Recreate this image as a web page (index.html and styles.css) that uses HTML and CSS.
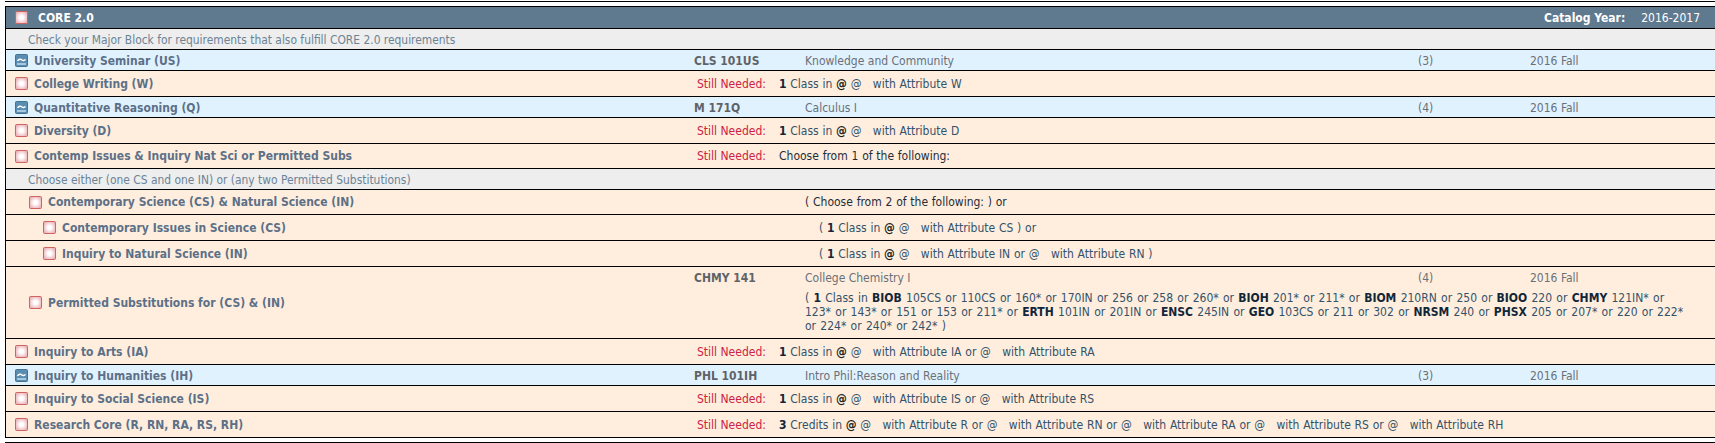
FILE: index.html
```html
<!DOCTYPE html>
<html lang="en">
<head>
<meta charset="utf-8">
<title>CORE 2.0</title>
<link rel="stylesheet" href="styles.css">
</head>
<body>
<svg class="defs" width="0" height="0" aria-hidden="true">
  <defs>
    <radialGradient id="pink" cx="50%" cy="50%" r="60%">
      <stop offset="0.25" stop-color="#ffffff"/>
      <stop offset="1" stop-color="#e8a9b0"/>
    </radialGradient>
    <symbol id="box" viewBox="0 0 13 13">
      <rect x="0.5" y="0.5" width="12" height="12" rx="1" fill="url(#pink)" stroke="#d0625f"/>
    </symbol>
    <symbol id="wave" viewBox="0 0 13 13">
      <rect x="0.5" y="0.5" width="12" height="12" rx="1" fill="#5b8db0" stroke="#44748f"/>
      <rect x="2" y="9" width="9" height="2" fill="#a9c8dd"/>
      <path d="M2.5 7 C4 4.6 6 5 7 6 C8 7 9.4 6.6 10.5 5.4" fill="none" stroke="#ffffff" stroke-width="1.4"/>
    </symbol>
  </defs>
</svg>
<div class="block">
  <div class="row head">
    <div class="label"><svg class="ico"><use href="#box"/></svg><span class="head-title">CORE 2.0</span></div>
    <div class="cat"><b>Catalog Year:</b><span>2016-2017</span></div>
  </div>
  <div class="row note"><p class="hint">Check your Major Block for requirements that also fulfill CORE 2.0 requirements</p></div>

  <div class="row done">
    <div class="label"><svg class="ico"><use href="#wave"/></svg><span>University Seminar (US)</span></div>
    <div class="course">CLS 101US</div><div class="title">Knowledge and Community</div><div class="cr">(3)</div><div class="term">2016 Fall</div>
  </div>
  <div class="row need tall">
    <div class="label"><svg class="ico"><use href="#box"/></svg><span>College Writing (W)</span></div>
    <div class="still">Still Needed:</div><div class="advice"><b>1</b> Class in <em>@</em> @ &nbsp; with Attribute W</div>
  </div>
  <div class="row done">
    <div class="label"><svg class="ico"><use href="#wave"/></svg><span>Quantitative Reasoning (Q)</span></div>
    <div class="course">M 171Q</div><div class="title">Calculus I</div><div class="cr">(4)</div><div class="term">2016 Fall</div>
  </div>
  <div class="row need tall">
    <div class="label"><svg class="ico"><use href="#box"/></svg><span>Diversity (D)</span></div>
    <div class="still">Still Needed:</div><div class="advice"><b>1</b> Class in <em>@</em> @ &nbsp; with Attribute D</div>
  </div>
  <div class="row need mid">
    <div class="label"><svg class="ico"><use href="#box"/></svg><span>Contemp Issues &amp; Inquiry Nat Sci or Permitted Subs</span></div>
    <div class="still">Still Needed:</div><div class="advice dark">Choose from 1 of the following:</div>
  </div>
  <div class="row note"><p class="hint">Choose either (one CS and one IN) or (any two Permitted Substitutions)</p></div>
  <div class="row need mid">
    <div class="label lv1"><svg class="ico"><use href="#box"/></svg><span>Contemporary Science (CS) &amp; Natural Science (IN)</span></div>
    <div class="group dark">( Choose from 2 of the following: ) or</div>
  </div>
  <div class="row need tall">
    <div class="label lv2"><svg class="ico"><use href="#box"/></svg><span>Contemporary Issues in Science (CS)</span></div>
    <div class="group nested">( <b>1</b> Class in <em>@</em> @ &nbsp; with Attribute CS ) or</div>
  </div>
  <div class="row need tall">
    <div class="label lv2"><svg class="ico"><use href="#box"/></svg><span>Inquiry to Natural Science (IN)</span></div>
    <div class="group nested">( <b>1</b> Class in <em>@</em> @ &nbsp; with Attribute IN or @ &nbsp; with Attribute RN )</div>
  </div>
  <div class="row need sub">
    <div class="label lv1"><svg class="ico"><use href="#box"/></svg><span>Permitted Substitutions for (CS) &amp; (IN)</span></div>
    <div class="sub-body">
      <div class="sub-course">
        <div class="course">CHMY 141</div><div class="title">College Chemistry I</div><div class="cr">(4)</div><div class="term">2016 Fall</div>
      </div>
      <p class="list">( <b>1</b> Class in <b>BIOB</b> 105CS or 110CS or 160* or 170IN or 256 or 258 or 260* or <b>BIOH</b> 201* or 211* or <b>BIOM</b> 210RN or 250 or <b>BIOO</b> 220 or <b>CHMY</b> 121IN* or<br>123* or 143* or 151 or 153 or 211* or <b>ERTH</b> 101IN or 201IN or <b>ENSC</b> 245IN or <b>GEO</b> 103CS or 211 or 302 or <b>NRSM</b> 240 or <b>PHSX</b> 205 or 207* or 220 or 222*<br>or 224* or 240* or 242* )</p>
    </div>
  </div>
  <div class="row need tall">
    <div class="label"><svg class="ico"><use href="#box"/></svg><span>Inquiry to Arts (IA)</span></div>
    <div class="still">Still Needed:</div><div class="advice"><b>1</b> Class in <em>@</em> @ &nbsp; with Attribute IA or @ &nbsp; with Attribute RA</div>
  </div>
  <div class="row done">
    <div class="label"><svg class="ico"><use href="#wave"/></svg><span>Inquiry to Humanities (IH)</span></div>
    <div class="course">PHL 101IH</div><div class="title">Intro Phil:Reason and Reality</div><div class="cr">(3)</div><div class="term">2016 Fall</div>
  </div>
  <div class="row need tall">
    <div class="label"><svg class="ico"><use href="#box"/></svg><span>Inquiry to Social Science (IS)</span></div>
    <div class="still">Still Needed:</div><div class="advice"><b>1</b> Class in <em>@</em> @ &nbsp; with Attribute IS or @ &nbsp; with Attribute RS</div>
  </div>
  <div class="row need tall">
    <div class="label"><svg class="ico"><use href="#box"/></svg><span>Research Core (R, RN, RA, RS, RH)</span></div>
    <div class="still">Still Needed:</div><div class="advice"><b>3</b> Credits in <em>@</em> @ &nbsp; with Attribute R or @ &nbsp; with Attribute RN or @ &nbsp; with Attribute RA or @ &nbsp; with Attribute RS or @ &nbsp; with Attribute RH</div>
  </div>
</div>
</body>
</html>
```

FILE: styles.css
```css
html, body {
  margin: 0;
  padding: 0;
  background: #fff;
  overflow: hidden;
}
body {
  font-family: "DejaVu Sans Condensed", "DejaVu Sans", sans-serif;
  font-stretch: condensed;
  font-size: 12px;
  color: #33526b;
}
.defs { position: absolute; }
.block {
  margin: 1px 0 0 5px;
  border-top: 1px solid #000;
  border-bottom: 1px solid #000;
  padding: 4px 0;
}
.row {
  display: flex;
  align-items: center;
  box-sizing: border-box;
  border-bottom: 1px solid #000;
  border-left: 1px solid #000;
  height: 21px;
}
.head {
  height: 23px;
  border-top: 1px solid #000;
  background: #5f798f;
  color: #fff;
  font-weight: bold;
}
.note { background: #eeeeee; padding-top: 1px; }
.done { background: #e1f2ff; padding-top: 1px; }
.need { background: #ffeedd; }
.tall { height: 26px; }
.mid { height: 25px; }
.sub { height: 72px; }
.label {
  width: 688px;
  flex: none;
  display: flex;
  align-items: center;
  padding-left: 9px;
  box-sizing: border-box;
  font-weight: bold;
  color: #5c7088;
}
.lv1 { padding-left: 23px; }
.lv2 { padding-left: 37px; }
.ico {
  width: 13px;
  height: 13px;
  flex: none;
  margin-right: 6px;
}
.head .label { color: #fff; }
.head-title { margin-left: 4px; }
.cat { margin-left: 850px; display: flex; }
.cat span { font-weight: normal; margin-left: 16px; }
.hint {
  margin: 0;
  padding-left: 22px;
  font-size: 11.9px;
  color: #6b8396;
}
.course {
  width: 111px;
  flex: none;
  font-weight: bold;
  color: #5f6368;
}
.title {
  width: 613px;
  flex: none;
  color: #6a7078;
}
.cr { width: 112px; flex: none; color: #6a7078; }
.term { color: #6a7078; }
.still {
  width: 82px;
  flex: none;
  margin-left: 3px;
  color: #cc2244;
}
.advice, .group { word-spacing: 0.35px; }
.advice b, .group b, .list b { color: #12263a; }
.advice em, .group em { font-style: normal; font-weight: bold; color: #222; }
.dark { color: #1f2d3a; }
.group { margin-left: 111px; }
.nested { margin-left: 125px; }
.sub-body {
  flex: none;
  width: 1000px;
  align-self: stretch;
  display: flex;
  flex-direction: column;
}
.sub-course {
  display: flex;
  align-items: center;
  height: 22px;
}
.list {
  margin: 2px 0 0 111px;
  white-space: nowrap;
  line-height: 14px;
  word-spacing: 0.85px;
}
```
